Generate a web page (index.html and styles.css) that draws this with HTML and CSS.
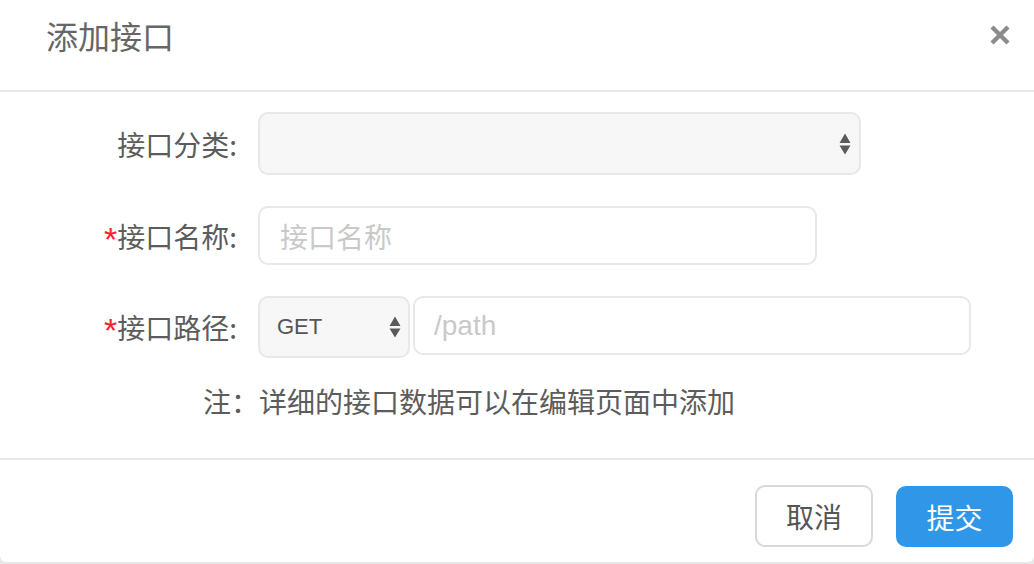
FILE: index.html
```html
<!DOCTYPE html>
<html lang="zh-CN">
<head>
<meta charset="utf-8">
<title>添加接口</title>
<link rel="stylesheet" href="styles.css">
</head>
<body>
<div class="modal">
  <div class="modal-header">
    <div class="modal-title">添加接口</div>
    <button class="modal-close" aria-label="关闭">
      <svg width="22" height="22" viewBox="0 0 22 22"><path d="M3 3 L19 19 M19 3 L3 19" stroke="#8c8c8c" stroke-width="4.4" stroke-linecap="butt"/></svg>
    </button>
  </div>
  <div class="modal-body">
    <div class="form-row row-cat">
      <div class="form-label"><span class="label-text">接口分类</span></div>
      <div class="select select-cat">
        <span class="select-value"></span>
        <svg class="arrows" width="12" height="22" viewBox="0 0 12 22"><path d="M0.5 10 L6 0.5 L11.5 10 Z M0.5 12.5 L11.5 12.5 L6 21.5 Z" fill="#5a5a5a"/></svg>
      </div>
    </div>
    <div class="form-row row-name">
      <div class="form-label"><span class="req">*</span><span class="label-text">接口名称</span></div>
      <div class="input input-name"><span class="placeholder">接口名称</span></div>
    </div>
    <div class="form-row row-path">
      <div class="form-label"><span class="req">*</span><span class="label-text">接口路径</span></div>
      <div class="path-group">
        <div class="select select-method">
          <span class="select-value method">GET</span>
          <svg class="arrows" width="12" height="22" viewBox="0 0 12 22"><path d="M0.5 10 L6 0.5 L11.5 10 Z M0.5 12.5 L11.5 12.5 L6 21.5 Z" fill="#5a5a5a"/></svg>
        </div>
        <div class="input input-path"><span class="placeholder latin">/path</span></div>
      </div>
    </div>
    <div class="note">注：详细的接口数据可以在编辑页面中添加</div>
  </div>
  <div class="modal-footer">
    <button class="btn btn-cancel">取消</button>
    <button class="btn btn-primary">提交</button>
  </div>
</div>
</body>
</html>
```

FILE: styles.css
```css
* { box-sizing: border-box; }
html, body { margin: 0; padding: 0; }
body {
  background: #e8e8e8;
  font-family: "Liberation Sans", "Noto Sans CJK SC", sans-serif;
  color: #666;
  width: 1034px;
  height: 564px;
  overflow: hidden;
}
.modal {
  width: 1034px;
  height: 562px;
  background: #fff;
  border-radius: 0 0 6px 6px;
  display: flex;
  flex-direction: column;
}
.modal-header {
  height: 92px;
  border-bottom: 2px solid #e9e9e9;
  display: flex;
  justify-content: space-between;
  align-items: flex-start;
  padding: 0 23px 0 46px;
}
.modal-title {
  font-size: 32px;
  line-height: 36px;
  margin-top: 17px;
  color: #666;
  font-family: "Noto Sans CJK SC", sans-serif;
}
.modal-close {
  border: 0;
  background: transparent;
  padding: 0;
  margin-top: 24px;
  width: 22px;
  height: 22px;
  display: block;
}
.modal-close svg { display: block; }
.modal-body {
  padding-top: 20px;
  height: 366px;
}
.form-row {
  display: flex;
  align-items: center;
}
.row-cat { height: 63px; margin-bottom: 31px; }
.row-name { height: 59px; margin-bottom: 31px; }
.row-path { height: 62px; margin-bottom: 26px; }
.form-label {
  width: 242px;
  flex: none;
  text-align: right;
  font-size: 28px;
  line-height: 34px;
  color: #5c5c5c;
  font-family: "Noto Sans CJK SC", sans-serif;
  margin-right: 16px;
  display: flex;
  justify-content: flex-end;
  align-items: center;
}
.label-text::after {
  content: ":";
  margin: 0 5px 0 0;
}
.req {
  color: #f5222d;
  font-family: "Liberation Sans", sans-serif;
  font-size: 34px;
  line-height: 34px;
  margin-right: 0;
  position: relative;
  top: 3px;
}
.select {
  background: #f7f7f7;
  border: 2px solid #e8e8e8;
  border-radius: 10px;
  display: flex;
  align-items: center;
  justify-content: space-between;
}
.select-cat {
  width: 603px;
  height: 63px;
  padding: 0 8px 0 18px;
}
.arrows { display: block; }
.input {
  background: #fff;
  border: 2px solid #e8e8e8;
  border-radius: 10px;
  display: flex;
  align-items: center;
}
.input-name {
  width: 559px;
  height: 59px;
  padding-left: 20px;
}
.placeholder {
  color: #c9c9c9;
  font-size: 28px;
  line-height: 34px;
  font-family: "Noto Sans CJK SC", sans-serif;
}
.placeholder.latin {
  font-family: "Liberation Sans", sans-serif;
  font-size: 28px;
}
.path-group {
  display: flex;
  align-items: flex-start;
  height: 62px;
  gap: 3px;
}
.select-method {
  width: 152px;
  height: 62px;
  padding: 0 7px 0 17px;
}
.method {
  font-family: "Liberation Sans", sans-serif;
  font-size: 22px;
  color: #555;
}
.input-path {
  width: 558px;
  height: 59px;
  padding-left: 19px;
}
.note {
  padding-left: 203px;
  font-size: 28px;
  line-height: 34px;
  color: #5c5c5c;
  font-family: "Noto Sans CJK SC", sans-serif;
}
.modal-footer {
  border-top: 2px solid #e9e9e9;
  display: flex;
  justify-content: flex-end;
  align-items: flex-start;
  gap: 23px;
  padding: 25px 21px 0 0;
  flex: 1;
}
.btn {
  height: 62px;
  border-radius: 10px;
  font-size: 28px;
  font-family: "Noto Sans CJK SC", sans-serif;
  padding: 0;
  display: flex;
  align-items: center;
  justify-content: center;
}
.btn-cancel {
  width: 118px;
  background: #fff;
  border: 2px solid #d9d9d9;
  color: #555;
}
.btn-primary {
  width: 117px;
  height: 61px;
  margin-top: 1px;
  background: #2f96e8;
  border: 2px solid #2f96e8;
  color: #fff;
}
```
